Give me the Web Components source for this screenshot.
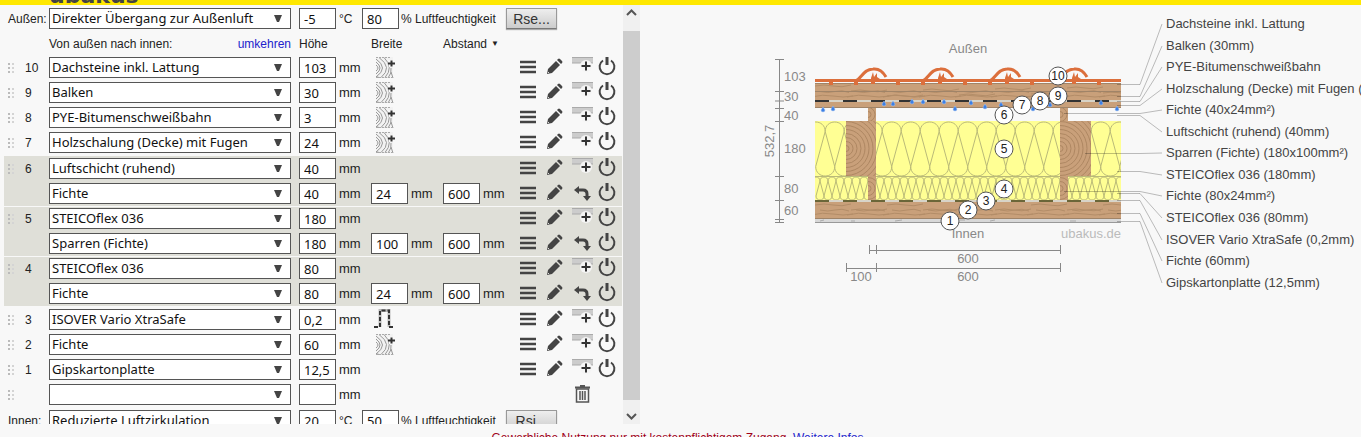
<!DOCTYPE html>
<html lang="de">
<head>
<meta charset="utf-8">
<meta name="viewport" content="width=device-width, initial-scale=1">
<title>ubakus – U-Wert-Rechner</title>
<style>
html, body { height: 100%; margin: 0; overflow: hidden; }
body { background: #f8f8f8; color: #222; font: 12px/16px "Liberation Sans", Arial, sans-serif; }
</style>
</head>
<body>
<ub-app></ub-app>
<script>
const define = (name, render) => customElements.define(name, class extends HTMLElement {
  connectedCallback() {
    if (this.shadowRoot) return;
    this.attachShadow({ mode: "open" }).innerHTML = render(this);
  }
});

/* ---------- icons ---------- */
const wood = '<path d="M2 0h17v21H2z" fill="#f2f2f2"/><g fill="none" stroke="#999"><path d="M2 8q4 3 0 6M2 5q8 6 0 12M2 2q13 9 0 18M5 .500q14 10 2 20M10 .500q10 10 1 20M17 11q1 5-3 10M2 19.500l3 1M17 15l2 6"/></g><path d="M2 .5h15M2 20.500h18" stroke="#aaa" stroke-dasharray="2 1"/><path d="M14 3h7v7h-6z" fill="#f8f8f8"/><path d="M14 6.500h7M17.500 3.500v6" stroke="#333" stroke-width="2"/>';
const ICONS = {
  menu: [18, 21, '<path d="M1 5h16M1 10h16M1 15h16" stroke="#444" stroke-width="2.400"/>'],
  pencil: [18, 21, '<path d="M1 17l1-5 8-8 4 4-8 8zM11 3l1-1q1-1 2 0l2 2q1 1 0 2l-1 1z" fill="#444"/><path d="M2 15l1 1" stroke="#ddd"/>'],
  add: [22, 21, '<path d="M1 0h21v6H1z" fill="#ccc"/><path d="M1 .5h21M1 6h21" stroke="#aaa"/><circle cx="15" cy="9" r="6" fill="#f5f5f5"/><path d="M10.500 9h9M15 4.500v9" stroke="#333" stroke-width="2"/>'],
  turn: [22, 21, '<path d="M8 7h4q4 0 4 4v3" fill="none" stroke="#444" stroke-width="3"/><path d="M3 7l5-4v8zM12 13h8l-4 5z" fill="#444"/>'],
  power: [20, 21, '<path d="M6 3.500a7.400 7.400 0 1 0 8 0" fill="none" stroke="#444" stroke-width="2"/><path d="M10 0v8" stroke="#444" stroke-width="3"/>'],
  wood: [22, 21, wood],
  foil: [22, 21, '<path d="M6 18V1.500h9V18" fill="none" stroke="#bbb" stroke-width="3"/><path d="M0 18h6V1.500h9V18h6" fill="none" stroke="#333" stroke-width="2" stroke-dasharray="4 2"/>'],
  trash: [22, 21, '<path d="M4 3.500h15M9 2h5" stroke="#555" stroke-width="2"/><path d="M5.500 5h12v13h-12zM9 7v9M11.500 7v9M14 7v9" fill="none" stroke="#555" stroke-width="1.500"/>'],
  grip: [8, 12, '<g fill="#bbb"><path d="M0 1h2v2H0zM0 5h2v2H0zM0 9h2v2H0z"/><path d="M4 1h2v2H4zM4 5h2v2H4zM4 9h2v2H4z" fill="#d4d4d4"/></g>'],
  up: [17, 17, '<path d="M4 10l4.500-4.500L13 10" fill="none" stroke="#555" stroke-width="2"/>'],
  down: [17, 25, '<path d="M4 14l4.500 4.500L13 14" fill="none" stroke="#555" stroke-width="2"/>'],
  caret: [10, 8, '<path d="M1 0h8L6 7H4z" fill="#444"/>'],
};
define("ub-icon", el => {
  const [w, h, art] = ICONS[el.getAttribute("name")];
  return `<style>:host{display:inline-flex} svg{display:block}</style>
    <svg width="${w}" height="${h}" viewBox="0 0 ${w} ${h}" aria-hidden="true">${art}</svg>`;
});

define("ub-icon-button", el => `
  <style>
    :host { display: flex; justify-content: center; }
    button { display: flex; padding: 0; border: 0; background: none; cursor: pointer; }
  </style>
  <button type="button" aria-label="${el.getAttribute("label")}"><ub-icon name="${el.getAttribute("name")}"></ub-icon></button>`);

/* ---------- form controls ---------- */
define("ub-select", el => `
  <style>
    :host { display: grid; width: 242px; align-items: center; }
    select, ub-icon { grid-area: 1 / 1; }
    select {
      appearance: none; box-sizing: border-box; width: 100%; height: 21px; margin: 0; padding: 0 20px 0 2px;
      border: 1px solid #555; border-radius: 0; background: #fff; color: #111;
      font: 13px/19px "Noto Sans", Verdana, sans-serif;
    }
    ub-icon { justify-self: end; margin-right: 8px; pointer-events: none; }
  </style>
  <select aria-label="${el.getAttribute("label")}"><option>${el.getAttribute("value")}</option></select>
  <ub-icon name="caret"></ub-icon>`);

define("ub-number", el => `
  <style>
    :host { display: block; width: 37px; }
    input {
      display: block; box-sizing: border-box; width: 100%; height: 21px; margin: 0; padding: 0 0 0 4px;
      border: 1px solid #555; border-radius: 0; background: #fff; color: #111;
      font: 13px/19px "Noto Sans", Verdana, sans-serif;
    }
  </style>
  <input type="text" inputmode="decimal" aria-label="${el.getAttribute("label")}" value="${el.getAttribute("value")}">`);

/* ---------- climate row (outside / inside) ---------- */
define("ub-climate", el => {
  const a = n => el.getAttribute(n);
  return `
  <style>
    :host { display: grid; grid-template-columns: 41px 250px 40px 23px 39px 105px auto; justify-content: start;
      align-items: center; height: 25px; padding-left: 8px; color: #222; }
    button { height: 21px; width: 51px; padding: 0; border: 1px solid #999; border-bottom-color: #777;
      background: linear-gradient(#eee, #ccc); box-shadow: 0 1px 1px #aaa; color: #333;
      font: 14px/18px "Liberation Sans", Arial, sans-serif; }
  </style>
  <span>${a("name")}:</span>
  <ub-select label="${a("name")}" value="${a("kind")}"></ub-select>
  <ub-number label="Temperatur ${a("name")}" value="${a("temp")}"></ub-number>
  <span>°C</span>
  <ub-number label="Luftfeuchtigkeit ${a("name")}" value="${a("hum")}"></ub-number>
  <span>% Luftfeuchtigkeit</span>
  <button type="button">${a("res")}</button>`;
});

/* ---------- material row ---------- */
define("ub-material", el => {
  const a = n => el.getAttribute(n);
  const field = (n, label) => a(n) === null ? "<span></span><span></span>"
    : `<ub-number label="${label}" value="${a(n)}"></ub-number><span>mm</span>`;
  const extra = a("extra");
  const btn = (n, l) => `<ub-icon-button name="${n}" label="${l}"></ub-icon-button>`;
  const tools = a("tools") === "empty"
    ? `<span></span><span></span>${btn("trash", "Löschen")}<span></span>`
    : btn("menu", "Menü") + btn("pencil", "Bearbeiten")
      + (a("tools") === "sub" ? btn("turn", "Drehen") : btn("add", "Schicht einfügen")) + btn("power", "Ein/Aus");
  return `
  <style>
    :host { display: grid; grid-template-columns: 20px 25px 250px 40px 32px 40px 32px 40px 28px 1fr;
      align-items: center; height: 25px; color: #222; font-size: 13px; }
    ub-icon[name=grip] { justify-self: center; margin-right: 4px; }
    .no { padding-left: 1px; font-size: 12px; }
    .extra { justify-self: start; margin-left: 3px; }
    .tools { display: grid; grid-template-columns: 27px 27px 27px 24px; justify-content: end; padding-right: 3px; }
  </style>
  ${a("no") === null ? "<span></span>" : '<ub-icon name="grip"></ub-icon>'}
  <span class="no">${a("no") ?? ""}</span>
  <ub-select label="Material" value="${a("value") ?? ""}"></ub-select>
  ${field("h", "Höhe")}
  ${extra ? `<ub-icon-button class="extra" name="${extra}" label="Balken hinzufügen"></ub-icon-button><span></span>` : field("b", "Breite")}
  ${field("d", "Abstand")}
  <div class="tools">${tools}</div>`;
});

define("ub-group", () => `
  <style>
    :host { display: block; background: #dfdfd8; }
    :host(:not([first])) { box-shadow: inset 0 1px #f8f8f8; }
  </style><slot></slot>`);

define("ub-scrollbar", () => `
  <style>
    :host { display: flex; flex-direction: column; width: 17px; background: #f0f0f0; }
    .thumb { flex: 1; background: #cdcdcd; }
    .up { height: 26px; } .down { height: 24px; }
  </style>
  <ub-icon-button class="up" name="up" label="Nach oben"></ub-icon-button>
  <div class="thumb"></div>
  <ub-icon-button class="down" name="down" label="Nach unten"></ub-icon-button>`);

define("ub-editor", () => `
  <style>
    :host { display: flex; flex: 0 0 640px; min-height: 0; overflow: hidden; }
    .list { flex: 1; padding-top: 1px; overflow: hidden; }
    .head { display: grid; grid-template-columns: 150px 92px 8px 72px 72px auto; justify-content: start;
      align-items: center; height: 22px; padding: 2px 0 0 49px; }
    .head a { color: #22c; text-decoration: none; text-align: right; }
    .head small { font-size: 8px; line-height: 1; }
    .abstand { display: flex; align-items: center; gap: 4px; }
    .rows { margin: 0 1px 0 4px; }
    .groups { padding: 1px 0; }
    .last { margin-top: 1px; }
  </style>
  <div class="list">
    <ub-climate name="Außen" kind="Direkter Übergang zur Außenluft" temp="-5" hum="80" res="Rse..."></ub-climate>
    <div class="head"><span>Von außen nach innen:</span><a href="#umkehren">umkehren</a><span></span><span>Höhe</span><span>Breite</span><span class="abstand">Abstand <small>▼</small></span></div>
    <div class="rows">
      <ub-material no="10" value="Dachsteine inkl. Lattung" h="103" extra="wood"></ub-material>
      <ub-material no="9" value="Balken" h="30" extra="wood"></ub-material>
      <ub-material no="8" value="PYE-Bitumenschweißbahn" h="3" extra="wood"></ub-material>
      <ub-material no="7" value="Holzschalung (Decke) mit Fugen" h="24" extra="wood"></ub-material>
      <div class="groups">
        <ub-group first>
          <ub-material no="6" value="Luftschicht (ruhend)" h="40"></ub-material>
          <ub-material value="Fichte" h="40" b="24" d="600" tools="sub"></ub-material>
        </ub-group>
        <ub-group>
          <ub-material no="5" value="STEICOflex 036" h="180"></ub-material>
          <ub-material value="Sparren (Fichte)" h="180" b="100" d="600" tools="sub"></ub-material>
        </ub-group>
        <ub-group>
          <ub-material no="4" value="STEICOflex 036" h="80"></ub-material>
          <ub-material value="Fichte" h="80" b="24" d="600" tools="sub"></ub-material>
        </ub-group>
      </div>
      <ub-material no="3" value="ISOVER Vario XtraSafe" h="0,2" extra="foil"></ub-material>
      <ub-material no="2" value="Fichte" h="60" extra="wood"></ub-material>
      <ub-material no="1" value="Gipskartonplatte" h="12,5"></ub-material>
      <ub-material no="" h="" tools="empty"></ub-material>
    </div>
    <ub-climate class="last" name="Innen" kind="Reduzierte Luftzirkulation" temp="20" hum="50" res="Rsi..."></ub-climate>
  </div>
  <ub-scrollbar></ub-scrollbar>`);

/* ---------- cross-section drawing ---------- */
define("ub-section", () => {
  const range = (a, b, s) => { const r = []; for (let x = a; x < b; x += s) r.push(x); return r; };
  const wave = (x0, x1, p, top, bottom) => {
    const h = p / 2, t = top + h, b = bottom - h, k = h * 4 / 3;
    return range(x0, x1, p).map(c =>
      `M${c - h} ${t}C${c - h} ${t - k} ${c + h} ${t - k} ${c + h} ${t}L${c} ${b}C${c} ${b + k} ${c + p} ${b + k} ${c + p} ${b}L${c + h} ${t}`).join("");
  };
  const endGrain = (x, y, w, h) => `<svg x="${x}" y="${y}" width="${w}" height="${h}"><rect width="100%" height="100%" fill="#c9a07a"/>
    <g fill="none" stroke="#ae8762">${range(3, 42, 4).map(r => `<circle cx="0" cy="${h / 2}" r="${r}"/>`).join("")}</g></svg>`;
  const tiles = range(873, 1080, 67).map(x =>
    `<path d="M${x - 18} 81C${x - 12} 80 ${x - 10} 69 ${x} 69Q${x + 8} 68 ${x + 13} 77" fill="none" stroke="#dc6f3c" stroke-width="3"/>
     <path d="M${x - 2} 84v-6l2-6 1 5 3-4v4l3 2-5 2v3zM${x - 19} 82h4v3h-4zM${x - 44} 82h4v3h-4zM${x + 23} 82h4v3h-4z" fill="#dc6f3c"/>`).join("");
  const grain = (y, h) => range(815, 1115, 36).map((x, i) => {
    const o = y + 3 + (i * 5) % (h - 6);
    return `<path d="M${x} ${o}q9-2 18 0t18-1M${x - 4} ${y + h - 3}q12-3 22-1t20 0M${x + 5} ${y + h / 2}q8 2 15 0t14 1"/>`;
  }).join("");
  const drops = [[823,110],[833,109],[884,104],[893,104],[912,102],[923,102],[944,102],[955,109],[971,103],[985,107],[1001,105],[1033,109],[1050,105],[1101,103],[1117,109]]
    .map(([x, y]) => `<path d="M${x} ${y - 3}l2 3q0 2-2 2t-2-2z"/>`).join("");
  const legend = [
    ["Dachsteine inkl. Lattung", 1117, 84], ["Balken (30mm)", 1117, 96], ["PYE-Bitumenschweißbahn", 1117, 101],
    ["Holzschalung (Decke) mit Fugen (24mm)", 1117, 105], ["Fichte (40x24mm²)", 1064, 113], ["Luftschicht (ruhend) (40mm)", 1117, 115],
    ["Sparren (Fichte) (180x100mm²)", 1085, 153], ["STEICOflex 036 (180mm)", 1117, 171], ["Fichte (80x24mm²)", 1064, 191],
    ["STEICOflex 036 (80mm)", 1117, 193], ["ISOVER Vario XtraSafe (0,2mm)", 1117, 200], ["Fichte (60mm)", 1117, 213],
    ["Gipskartonplatte (12,5mm)", 1117, 221]];
  const rowY = i => Math.round(24 + i * 21.55);
  const leaders = legend.map(([, x, y], i) => `<path d="M${x} ${y}.500H1140L1162 ${rowY(i)}"/>`).join("");
  const texts = legend.map(([t], i) => `<text x="1166" y="${rowY(i) + 4}">${t}</text>`).join("");
  const badges = [[10,1058,76],[9,1058,96],[8,1040,101],[7,1022,105],[6,1004,115],[5,1004,149],[4,1004,189],[3,986,201],[2,968,210],[1,950,221]]
    .map(([n, x, y]) => `<circle cx="${x}" cy="${y}" r="9" fill="#fff" stroke="#555"/><text x="${x}" y="${y + 4}">${n}</text>`).join("");
  const dims = [["103", 81], ["30", 101], ["40", 120], ["180", 153], ["80", 193], ["60", 215]]
    .map(([t, y]) => `<text x="784" y="${y}">${t}</text>`).join("");
  return `
  <style>
    :host { display: block; flex: 1; min-width: 0; overflow: hidden; padding-left: 110px; }
    svg { display: block; font: 13px "Liberation Sans", Arial, sans-serif; }
  </style>
  <svg width="621" height="295" viewBox="750 5 621 295" role="img" aria-label="Querschnitt des Bauteils">
    <rect x="815" y="83" width="306" height="25" fill="#c9a07a"/>
    <rect x="815" y="121" width="306" height="80" fill="#ffff94"/>
    <rect x="815" y="201" width="306" height="18" fill="#c9a07a"/>
    <svg x="815" y="83" width="306" height="140" viewBox="815 83 306 140" fill="none" stroke="#b38d68">
      ${grain(83, 17)}${grain(202, 16)}<path d="M815 91.500h306M815 83.500h306M815 107.500h306M815 218.500h306" stroke="#a08468"/>
      <path d="${wave(815.7, 1130, 19, 122, 176)}${wave(816, 1130, 8, 177, 200)}M815 176.500h306" stroke="#baba78"/>
    </svg>
    ${endGrain(868, 108, 8, 13)}${endGrain(1060, 108, 8, 13)}
    ${endGrain(846, 121, 30, 55)}${endGrain(1060, 121, 31, 55)}
    ${endGrain(868, 176, 8, 25)}${endGrain(1060, 176, 8, 25)}
    <g stroke-width="2">
      <path d="M815 101h306M815 201h306" stroke="#d8d4c8"/>
      <path d="M815 101h306" stroke="#333" stroke-dasharray="14 14"/>
      <path d="M815 201h306" stroke="#6b6638" stroke-dasharray="14 14"/>
    </g>
    <rect x="815" y="219" width="306" height="4" fill="#d8d8d8"/>
    <path d="M815 222.500h306" stroke="#999"/>
    <path d="M820 221l4-1M851 221h4M895 221l7-1M960 220h5M990 221l5-1M1070 221h6" stroke="#aaa"/>
    <rect x="815" y="79" width="306" height="3" fill="#dc6f3c"/>
    ${tiles}
    <g fill="#3b7fe6" stroke="#a9c4ee" stroke-width=".5">${drops}</g>
    <g fill="none" stroke="#000" stroke-opacity=".25">${leaders}</g>
    <g fill="none" stroke="#888">
      <path d="M779.500 59v164M775 59.500h9M775 91.500h9M775 101h9M775 108.500h9M775 121.500h9M775 176.500h9M775 200.500h9M775 219.500h9M775 222.500h9"/>
      <path d="M869 250.500h191M869.500 245v9M876.500 245v9M1060.500 245v9M846 268.500h214M846.500 263v9M876.500 263v9M1060.500 263v9"/>
    </g>
    <g fill="#888">${dims}
      <text transform="translate(774 141) rotate(-90)" text-anchor="middle">532,7</text>
      <g text-anchor="middle"><text x="968" y="53">Außen</text><text x="968" y="238">Innen</text>
      <text x="968" y="263">600</text><text x="968" y="281">600</text><text x="861" y="281">100</text></g>
      <text x="1121" y="238" text-anchor="end" fill="#bbb">ubakus.de</text>
    </g>
    <g fill="#444">${texts}</g>
    <g fill="#222" font-size="12" text-anchor="middle">${badges}</g>
  </svg>`;
});

/* ---------- page ---------- */
define("ub-header", () => `
  <style>
    :host { display: flex; flex: 0 0 5px; align-items: flex-end; overflow: hidden; background: #ffe800; padding-left: 49px; }
    strong { font: bold 22px/18px "DejaVu Sans", Verdana, sans-serif; color: #444; }
  </style><strong>ubakus</strong>`);

define("ub-footer", () => `
  <style>
    :host { display: block; flex: 0 0 7px; overflow: hidden; padding: 6px 6px 0 0; text-align: center; color: #a00018; }
    a { color: #22c; text-decoration: none; }
  </style>Gewerbliche Nutzung nur mit kostenpflichtigem Zugang. <a href="#infos">Weitere Infos</a>`);

define("ub-app", () => `
  <style>
    :host { display: flex; flex-direction: column; height: 100vh; }
    main { display: flex; flex: 1; min-height: 0; }
  </style>
  <ub-header></ub-header>
  <main><ub-editor></ub-editor><ub-section></ub-section></main>
  <ub-footer></ub-footer>`);
</script>
</body>
</html>
